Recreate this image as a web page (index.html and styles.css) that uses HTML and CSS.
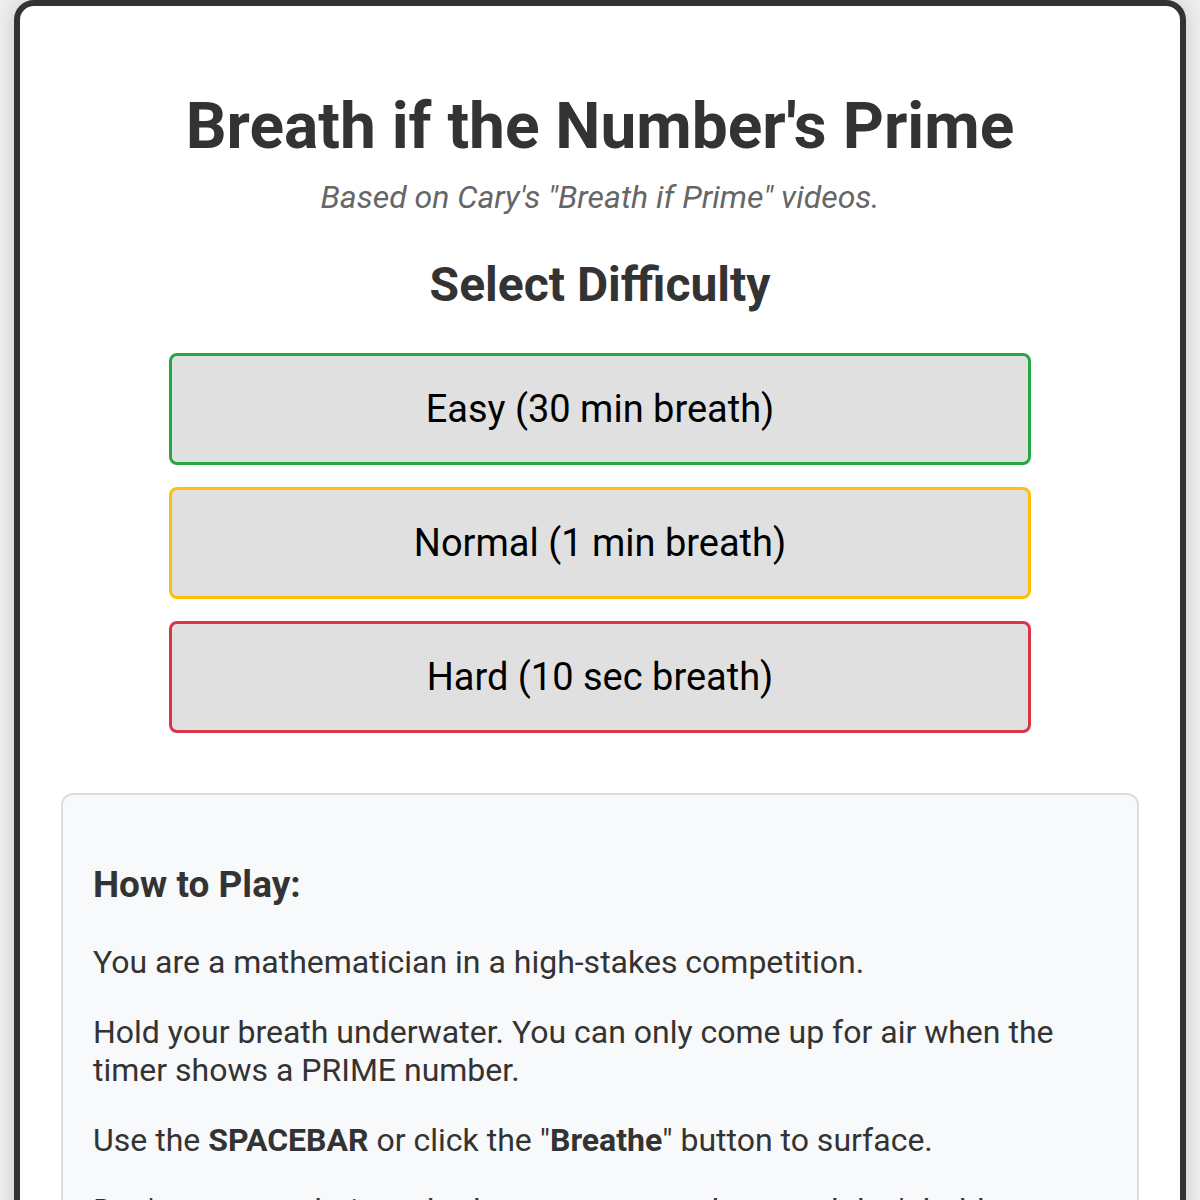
FILE: index.html
```html
<!DOCTYPE html>
<html>
<head>
<meta charset="utf-8">
<link rel="stylesheet" href="styles.css">
</head>
<body>
<div class="container">
  <h1 class="title">Breath if the Number's Prime</h1>
  <p class="subtitle">Based on Cary's "Breath if Prime" videos.</p>
  <h2 class="section-title">Select Difficulty</h2>
  <div class="buttons">
    <button class="diff easy">Easy (30 min breath)</button>
    <button class="diff normal">Normal (1 min breath)</button>
    <button class="diff hard">Hard (10 sec breath)</button>
  </div>
  <div class="info">
    <h3 class="info-title">How to Play:</h3>
    <p>You are a mathematician in a high-stakes competition.</p>
    <p>Hold your breath underwater. You can only come up for air when the timer shows a PRIME number.</p>
    <p>Use the <strong>SPACEBAR</strong> or click the "<strong>Breathe</strong>" button to surface.</p>
    <p>Don't come up during a bad moment or you lose, and don't hold your breath too long.</p>
  </div>
</div>
</body>
</html>
```
FILE: styles.css
```css
html, body {
  margin: 0;
  padding: 0;
}
body {
  background: #eeeeee;
  font-family: Roboto, "Noto Sans", sans-serif;
  color: #333;
  font-size: 32px;
  padding: 0 14px;
  overflow: hidden;
  height: 1200px;
}
.container {
  background: #fff;
  border: 6px solid #333;
  border-radius: 20px;
  padding: 40px 41px;
  box-shadow: 0 0 20px rgba(0,0,0,0.15);
  text-align: center;
}
.title {
  font-size: 64px;
  font-weight: 700;
  margin: 43px 0 14px;
  color: #333;
}
.subtitle {
  font-style: italic;
  color: #666;
  font-size: 32px;
  margin: 0 0 40px;
}
.section-title {
  font-size: 48px;
  font-weight: 700;
  margin: 0 0 40px;
}
.buttons {
  display: flex;
  flex-direction: column;
  align-items: center;
  gap: 22px;
}
.diff {
  width: 80%;
  height: 112px;
  background: #e0e0e0;
  border: 3px solid;
  border-radius: 8px;
  font-family: Roboto, "Noto Sans", sans-serif;
  font-size: 38px;
  color: #000;
  cursor: pointer;
}
.easy { border-color: #28a745; }
.normal { border-color: #ffc107; }
.hard { border-color: #dc3545; }
.info {
  margin-top: 60px;
  background: #f8f9fa;
  border: 2px solid #ddd;
  border-radius: 12px;
  padding: 36px 30px 30px;
  text-align: left;
}
.info-title {
  font-size: 37px;
  font-weight: 700;
  margin: 32px 0 37px;
}
.info p {
  margin: 0 0 32px;
}
```
